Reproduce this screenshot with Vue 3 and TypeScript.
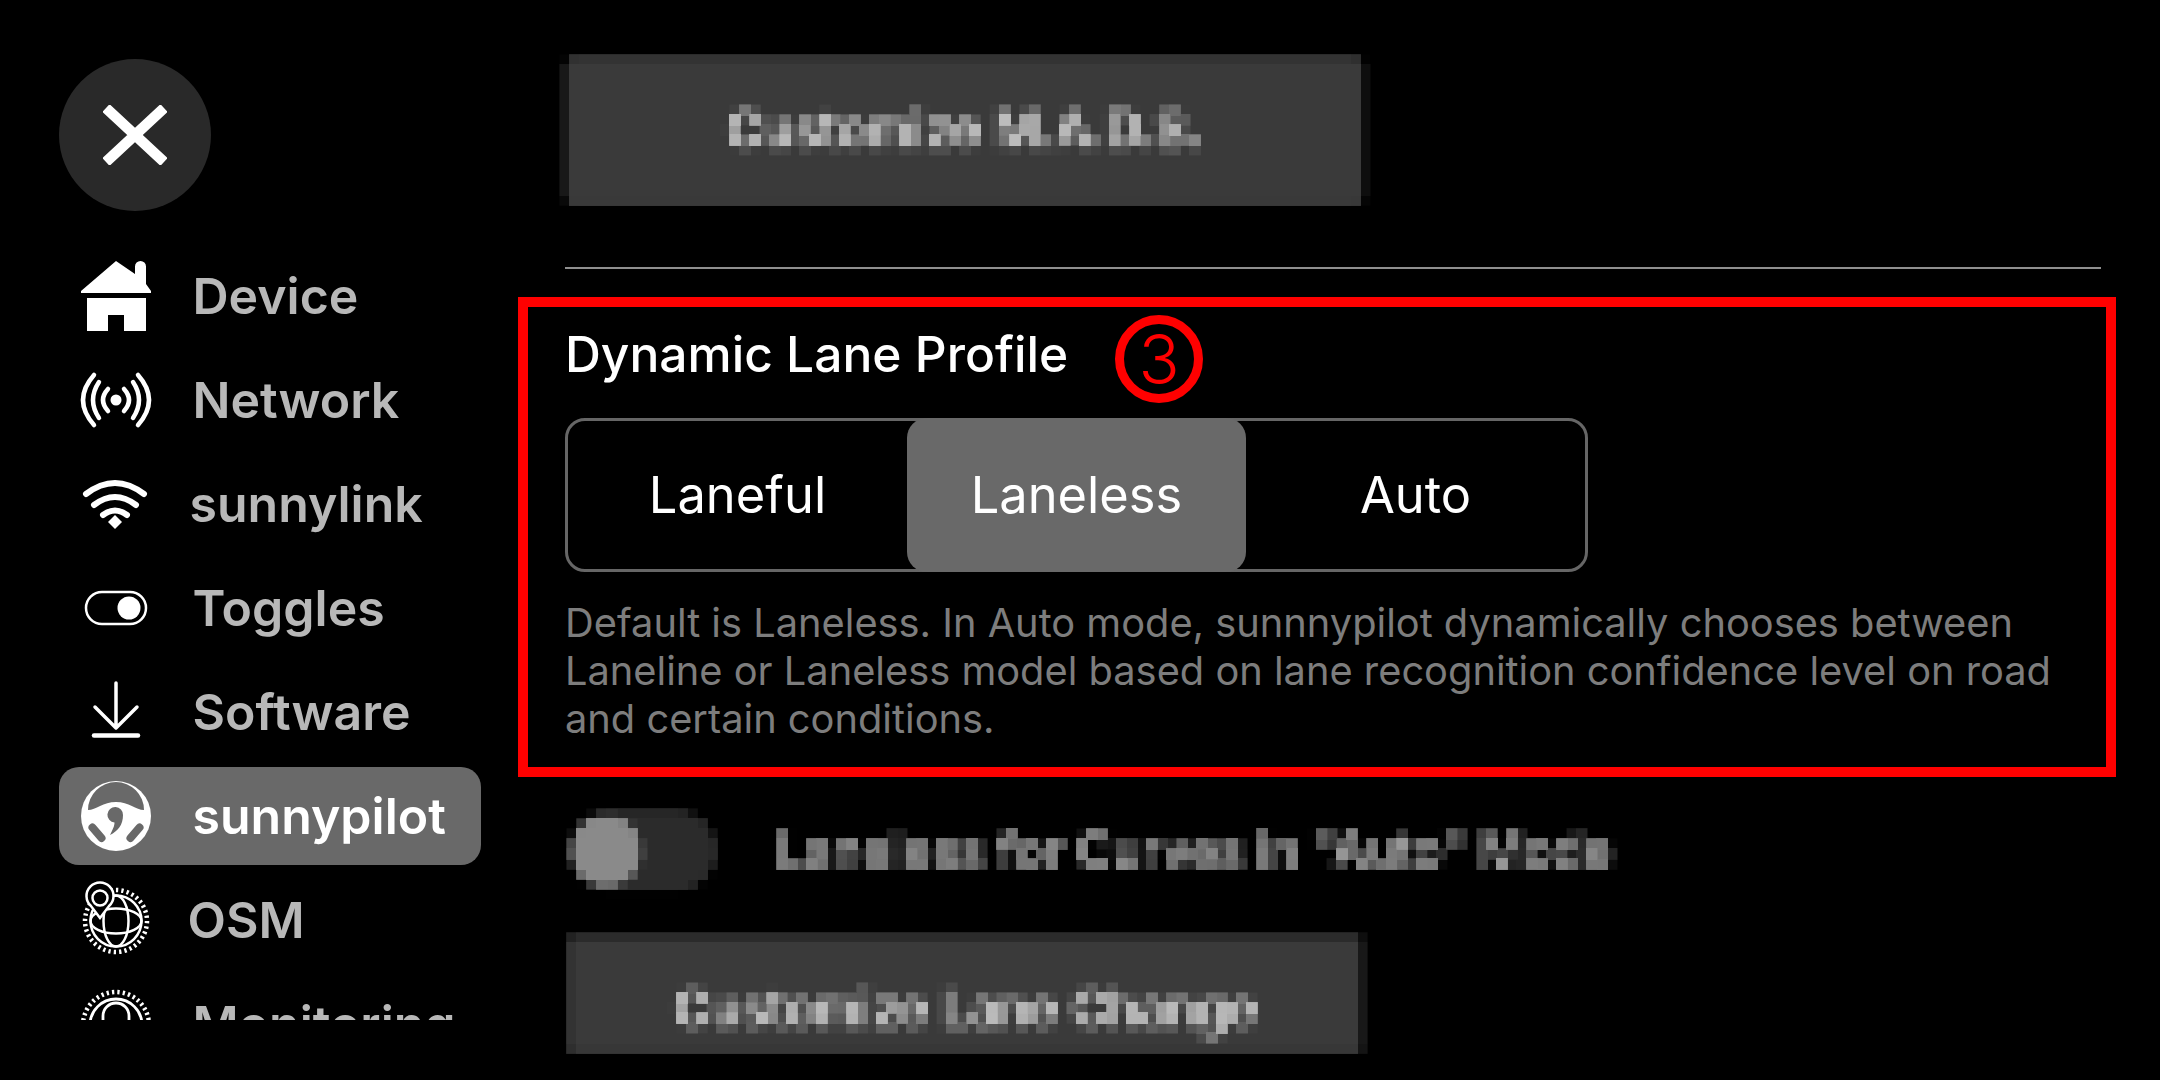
<script setup lang="ts">
interface NavItem {
  id: string
  label: string
  tight?: string
  active?: boolean
}

const navItems: NavItem[] = [
  { id: 'device', label: 'Device' },
  { id: 'network', label: 'Network' },
  { id: 'sunnylink', label: 'sunnylink', tight: 'tight-a' },
  { id: 'toggles', label: 'Toggles' },
  { id: 'software', label: 'Software' },
  { id: 'sunnypilot', label: 'sunnypilot', active: true },
  { id: 'osm', label: 'OSM', tight: 'tight-b' },
  { id: 'monitoring', label: 'Monitoring' },
]

const segments: { label: string; active?: boolean }[] = [
  { label: 'Laneful' },
  { label: 'Laneless', active: true },
  { label: 'Auto' },
]
</script>

<template>
  <div class="page">
    <svg class="defs" width="0" height="0" aria-hidden="true">
      <filter id="mosaic" x="0" y="0" width="1" height="1" color-interpolation-filters="sRGB">
        <feGaussianBlur in="SourceGraphic" stdDeviation="2" result="soft" />
        <feFlood x="4" y="4" width="2" height="2" flood-color="#000" />
        <feComposite width="10" height="10" />
        <feTile result="grid" />
        <feComposite in="soft" in2="grid" operator="in" />
        <feMorphology operator="dilate" radius="5" />
      </filter>
    </svg>

    <aside class="sidebar">
      <button class="close" type="button" aria-label="Close">
        <svg width="64" height="60" viewBox="0 0 64 60">
          <path d="M3 3 L61 57 M61 3 L3 57" stroke="#fff" stroke-width="10.500" fill="none" />
        </svg>
      </button>

      <nav class="nav">
        <div v-for="item in navItems" :key="item.id" class="row" :class="{ active: item.active }">
          <svg class="icon" width="70" height="70" viewBox="0 0 70 70">
            <g v-if="item.id === 'device'" fill="#fff">
              <path d="M35 0 L54 13 V5.5 a5.5 5.5 0 0 1 11 0 V23 L70 30 V32 H0 V30 Z" />
              <path d="M6 37 H65 V70 H43 V54 H27 V70 H6 Z" />
            </g>
            <g v-else-if="item.id === 'network'" fill="none" stroke="#fff" stroke-width="4.5" stroke-linecap="round">
              <circle cx="35" cy="35" r="5.5" fill="#fff" stroke="none" />
              <path d="M27 24 Q17 35 27 46 M43 24 Q53 35 43 46" />
              <path d="M18 17 Q6 35 18 53 M52 17 Q64 35 52 53" />
              <path d="M13 10 Q-9 35 13 60 M57 10 Q79 35 57 60" />
            </g>
            <g v-else-if="item.id === 'sunnylink'" fill="none" stroke="#fff" stroke-width="6" stroke-linecap="round">
              <path d="M5 25 Q34 3 63 25" />
              <path d="M13 36 Q34 20 55 36" />
              <path d="M22 46 Q34 37 46 46" />
              <path d="M34 46 L41 53 L34 60 L27 53 Z" fill="#fff" stroke="none" />
            </g>
            <g v-else-if="item.id === 'toggles'">
              <rect x="5" y="19" width="60" height="32" rx="16" fill="none" stroke="#fff" stroke-width="2.5" />
              <circle cx="48" cy="35" r="11.5" fill="#fff" />
            </g>
            <g v-else-if="item.id === 'software'" fill="none" stroke="#fff" stroke-width="4" stroke-linecap="round" stroke-linejoin="round">
              <path d="M35 6 V50 M14 30 L35 51 L56 30" stroke-width="3.5" />
              <path d="M13 58.5 H57" stroke-width="4.5" />
            </g>
            <g v-else-if="item.id === 'sunnypilot'">
              <circle cx="35" cy="35" r="35" fill="#fff" />
              <path d="M7 29 A28 28 0 0 1 63 29 C55 29 48 21 35 21 C22 21 15 29 7 29 Z" fill="#696969" />
              <path d="M11.5 46.5 L20.5 57 M58.5 46.5 L49.500 57" stroke="#696969" stroke-width="8" stroke-linecap="round" />
              <path d="M42 34 C42 44 37 50 29 54 C32 48 33.500 45 33.500 41.500 A7.800 7.800 0 1 1 42 34 Z" fill="#696969" />
            </g>
            <g v-else-if="item.id === 'osm'" fill="none" stroke="#fff" stroke-width="2.5">
              <circle cx="35" cy="36" r="31" stroke-width="4.5" stroke-dasharray="2.300 3.100" />
              <circle cx="35" cy="36" r="25.500" />
              <ellipse cx="35" cy="36" rx="12.500" ry="25.500" />
              <ellipse cx="35" cy="36" rx="25.500" ry="12.500" />
              <path d="M19 33 L10 21 A13.500 13.500 0 1 1 28 21 Z" fill="#000" />
              <circle cx="19" cy="13" r="7.500" />
            </g>
            <g v-else fill="none" stroke="#fff" stroke-width="2.800">
              <circle cx="35" cy="36" r="33" stroke-width="4.500" stroke-dasharray="2.300 3.100" />
              <circle cx="35" cy="36" r="26" />
              <path d="M22 40 V27 a13 13 0 0 1 26 0 V40" />
            </g>
          </svg>
          <span class="label" :class="item.tight">{{ item.label }}</span>
        </div>
      </nav>
    </aside>

    <main class="main">
      <div class="mosaic mosaic-top">
        <div class="plain-btn upper">Customize M.A.D.S.</div>
      </div>

      <div class="divider"></div>

      <section class="highlight">
        <h2 class="title">Dynamic Lane Profile</h2>
        <span class="marker">3</span>
        <div class="segments">
          <div v-for="seg in segments" :key="seg.label" class="segment" :class="{ on: seg.active }">{{ seg.label }}</div>
        </div>
        <p class="desc">Default is Laneless. In Auto mode, sunnnypilot dynamically chooses between Laneline or Laneless model based on lane recognition confidence level on road and certain conditions.</p>
      </section>

      <div class="mosaic mosaic-toggle">
        <div class="switch"><span class="knob"></span></div>
        <span class="switch-text">Laneless for Curves in "Auto" Mode</span>
      </div>

      <div class="mosaic mosaic-bottom">
        <div class="plain-btn lower">Customize Lane Change</div>
      </div>
    </main>
  </div>
</template>

<style>
html, body { margin: 0; background: #000; }
</style>

<style scoped>
.page {
  width: 2160px;
  height: 1080px;
  display: flex;
  background: #000;
  overflow: hidden;
  font-family: Inter, "Noto Sans", sans-serif;
  color: #fff;
}
.defs { position: absolute; }
.sidebar {
  width: 518px;
  flex: none;
  padding: 59px 0 0 59px;
  box-sizing: border-box;
}
.close {
  width: 152px;
  height: 152px;
  border: 0;
  padding: 0;
  border-radius: 50%;
  background: #292929;
  display: flex;
  align-items: center;
  justify-content: center;
}
.nav {
  margin-top: 36px;
  width: 422px;
  height: 773px;
  overflow: hidden;
  display: flex;
  flex-direction: column;
  gap: 6px;
}
.row {
  flex: none;
  height: 98px;
  display: flex;
  align-items: center;
  gap: 41.500px;
  padding-left: 22px;
  border-radius: 20px;
  color: #b8b8b8;
  font-size: 50px;
  font-weight: 600;
}
.row.active { background: #696969; color: #fff; }
.icon { flex: none; overflow: visible; }
.tight-a { margin-left: -3px; }
.tight-b { margin-left: -5px; }
.main {
  flex: 1;
  min-width: 0;
  display: flex;
  flex-direction: column;
  align-items: flex-start;
}
.mosaic {
  background: #000;
  box-sizing: border-box;
  flex: none;
  filter: url(#mosaic);
}
.mosaic-top {
  margin: 45px 0 0 32px;
  width: 830px;
  height: 170px;
  padding: 13px 17px 11px 16px;
  display: flex;
}
.plain-btn {
  flex: 1;
  background: #3a3a3a;
  border-radius: 10px;
  display: flex;
  align-items: center;
  justify-content: center;
  font-size: 50px;
  font-weight: 500;
  color: #d4d4d4;
}
.plain-btn.upper { padding-bottom: 4px; box-sizing: border-box; }
.plain-btn.lower { align-items: flex-start; padding-top: 41px; border-radius: 4px; }
.divider {
  margin: 52px 0 0 47px;
  width: 1536px;
  height: 2px;
  background: #8f8f8f;
}
.highlight {
  position: relative;
  margin-top: 28px;
  width: 1598px;
  height: 480px;
  box-sizing: border-box;
  border: 10px solid #f00;
  padding: 17px 6px 0 37px;
}
.title {
  margin: 0;
  font-size: 49.700px;
  line-height: 60px;
  font-weight: 500;
}
.marker {
  position: absolute;
  left: 587px;
  top: 8px;
  width: 88px;
  height: 88px;
  box-sizing: border-box;
  border: 9px solid #f00;
  border-radius: 50%;
  display: flex;
  align-items: center;
  justify-content: center;
  color: #f00;
  font-size: 68px;
  font-weight: 300;
}
.segments {
  margin-top: 34px;
  width: 1023px;
  height: 154px;
  box-sizing: border-box;
  border: 3px solid #666;
  border-radius: 20px;
  display: flex;
}
.segment {
  flex: 1;
  margin: -3px 0;
  padding-bottom: 2px;
  display: flex;
  align-items: center;
  justify-content: center;
  border-radius: 20px;
  font-size: 50.600px;
}
.segment.on { background: #696969; }
.desc {
  margin: 27px 0 0;
  font-size: 39.800px;
  line-height: 48px;
  color: #7d7d7d;
}
.mosaic-toggle {
  margin: 22px 0 0 39px;
  width: 1100px;
  height: 106px;
  padding: 13px 0 0 14px;
  display: flex;
  align-items: flex-start;
}
.switch {
  width: 144px;
  height: 77px;
  border-radius: 40px;
  background: #2b2b2b;
  display: flex;
  align-items: center;
  flex: none;
}
.knob {
  width: 68px;
  height: 68px;
  margin-left: 1px;
  border-radius: 50%;
  background: #8a8a8a;
}
.switch-text {
  margin: 14px 0 0 62px;
  font-size: 49px;
  font-weight: 500;
  line-height: 50px;
  color: #a8a8a8;
  white-space: nowrap;
}
.mosaic-bottom {
  margin: 18px 0 0 39px;
  width: 820px;
  height: 142px;
  padding: 14px 16px 14px 13px;
  display: flex;
}
</style>
